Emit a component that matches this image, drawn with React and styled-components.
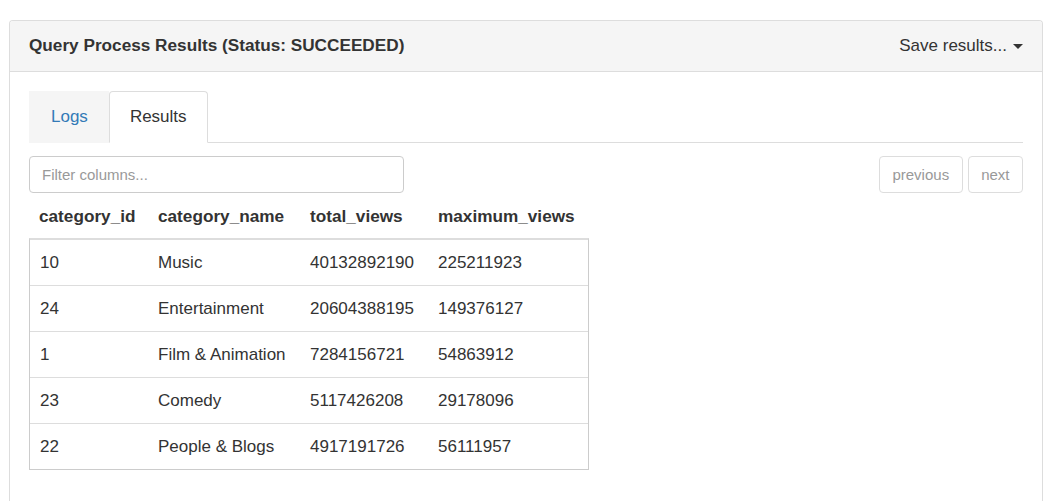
import React from 'react';
import styled, { createGlobalStyle } from 'styled-components';

const GlobalStyle = createGlobalStyle`
  html, body {
    margin: 0;
    padding: 0;
    background: #fff;
  }
  body {
    font-family: "Liberation Sans", Arial, sans-serif;
    color: #333;
  }
`;

const columns = [
  { key: 'category_id', width: 118 },
  { key: 'category_name', width: 152 },
  { key: 'total_views', width: 128 },
  { key: 'maximum_views', width: 160 }
];

const rows = [
  ['10', 'Music', '40132892190', '225211923'],
  ['24', 'Entertainment', '20604388195', '149376127'],
  ['1', 'Film & Animation', '7284156721', '54863912'],
  ['23', 'Comedy', '5117426208', '29178096'],
  ['22', 'People & Blogs', '4917191726', '56111957']
];

const gridTemplate = columns.map(c => `${c.width}px`).join(' ');

export default function App() {
  return (
    <Page>
      <GlobalStyle />
      <Panel>
        <Heading>
          <Title>Query Process Results (Status: SUCCEEDED)</Title>
          <SaveMenu>
            Save results... <Caret />
          </SaveMenu>
        </Heading>
        <Body>
          <Tabs>
            <Tab>Logs</Tab>
            <Tab isActive>Results</Tab>
          </Tabs>
          <Toolbar>
            <FilterInput placeholder="Filter columns..." />
            <Pager>
              <PagerButton>previous</PagerButton>
              <PagerButton>next</PagerButton>
            </Pager>
          </Toolbar>
          <HeaderRow>
            {columns.map(c => (
              <HeaderCell key={c.key}>{c.key}</HeaderCell>
            ))}
          </HeaderRow>
          <TableBody>
            {rows.map(row => (
              <Row key={row[0]}>
                {row.map((value, i) => (
                  <Cell key={i}>{value}</Cell>
                ))}
              </Row>
            ))}
          </TableBody>
        </Body>
      </Panel>
    </Page>
  );
}

const Page = styled.div`
  padding: 20px 17px 0 9px;
`;

const Panel = styled.div`
  border: 1px solid #ddd;
  border-bottom: none;
  border-radius: 4px 4px 0 0;
  min-height: 490px;
`;

const Heading = styled.div`
  display: flex;
  align-items: center;
  justify-content: space-between;
  height: 50px;
  padding: 0 19px;
  background: #f5f5f5;
  border-bottom: 1px solid #ddd;
  border-radius: 3px 3px 0 0;
`;

const Title = styled.div`
  font-size: 17.2px;
  font-weight: bold;
  color: #333;
  margin-top: -1px;
`;

const SaveMenu = styled.div`
  display: flex;
  align-items: center;
  gap: 6px;
  font-size: 17px;
  color: #333;
  margin-top: -1px;
`;

const Caret = styled.span`
  display: inline-block;
  width: 0;
  height: 0;
  border-top: 5px solid #333;
  border-left: 5px solid transparent;
  border-right: 5px solid transparent;
  margin-top: 2px;
`;

const Body = styled.div`
  padding: 19px 19px 0 19px;
`;

const Tabs = styled.div`
  display: flex;
  border-bottom: 1px solid #ddd;
`;

const Tab = styled.div`
  height: 50px;
  line-height: 50px;
  padding: ${props => (props.isActive ? '0 20px' : '0 20px 0 21px')};
  font-size: 17px;
  margin-bottom: -1px;
  color: ${props => (props.isActive ? '#333' : '#337ab7')};
  background: ${props => (props.isActive ? '#fff' : '#f5f5f5')};
  border: 1px solid ${props => (props.isActive ? '#ddd' : '#f5f5f5')};
  border-bottom-color: ${props => (props.isActive ? '#fff' : '#f5f5f5')};
  border-radius: ${props => (props.isActive ? '4px 4px 0 0' : '0')};
`;

const Toolbar = styled.div`
  display: flex;
  justify-content: space-between;
  align-items: center;
  margin-top: 13px;
`;

const FilterInput = styled.input`
  box-sizing: border-box;
  width: 375px;
  height: 37px;
  padding: 0 12px;
  font-family: "Liberation Sans", Arial, sans-serif;
  font-size: 15px;
  color: #555;
  border: 1px solid #ccc;
  border-radius: 4px;
  outline: none;

  &::placeholder {
    color: #999;
  }
`;

const Pager = styled.div`
  display: flex;
  gap: 5px;
`;

const PagerButton = styled.div`
  box-sizing: border-box;
  height: 37px;
  line-height: 35px;
  padding: 0 12.5px;
  font-size: 15px;
  color: #999;
  border: 1px solid #ddd;
  border-radius: 4px;
  background: #fff;
`;

const HeaderRow = styled.div`
  display: grid;
  grid-template-columns: ${gridTemplate};
  height: 44px;
  align-items: center;
  margin-top: 1px;
  padding-left: 1px;
`;

const HeaderCell = styled.div`
  padding: 0 10px;
  font-size: 17.2px;
  font-weight: bold;
  color: #333;
  white-space: nowrap;

  &:first-child {
    padding-left: 9px;
  }
`;

const TableBody = styled.div`
  display: inline-block;
  border: 1px solid #ccc;
  border-top: 2px solid #ddd;
`;

const Row = styled.div`
  display: grid;
  grid-template-columns: ${gridTemplate};
  height: 45px;
  align-items: center;
  border-top: 1px solid #ddd;

  &:first-child {
    border-top: none;
  }
`;

const Cell = styled.div`
  padding: 0 10px;
  font-size: 17px;
  color: #333;
  white-space: nowrap;
`;
